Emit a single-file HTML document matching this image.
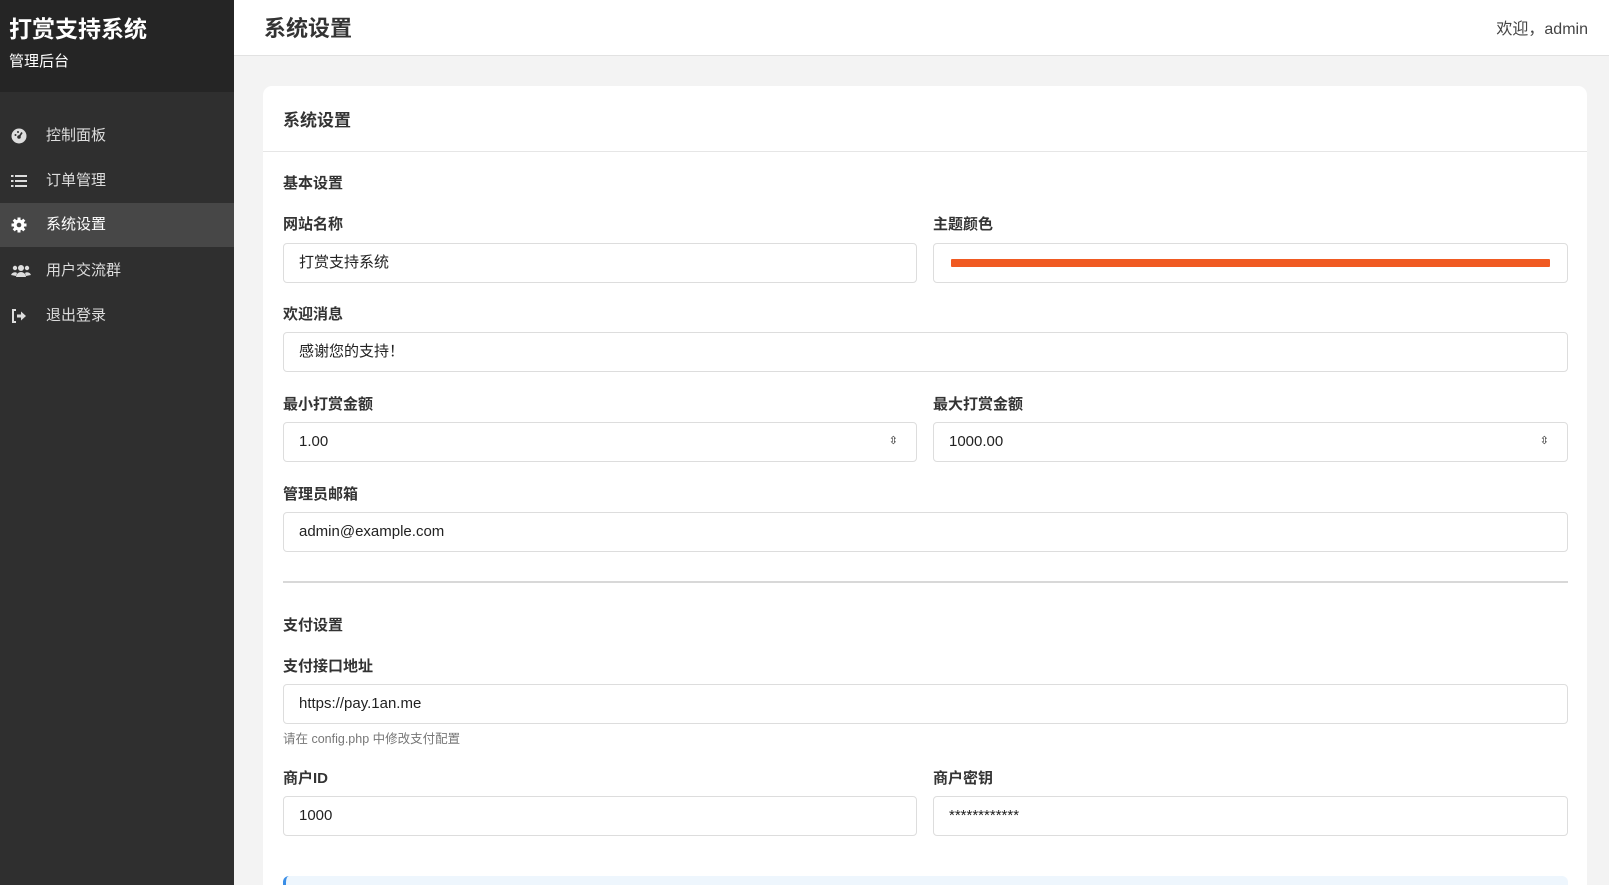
<!DOCTYPE html>
<html><head><meta charset="utf-8"><style>
*{box-sizing:border-box;margin:0;padding:0}
html,body{width:1609px;height:885px;overflow:hidden}
body{background:#f3f3f3;font-family:"Liberation Sans","Noto Sans CJK SC",sans-serif;color:#333;position:relative}
.sb{position:absolute;left:0;top:0;width:234px;height:885px;background:#2f2f2f}
.sbh{height:92px;background:#252525;padding:14px 0 0 9px;color:#fff}
.sbh h1{font-size:23px;font-weight:bold;line-height:30px}
.sbh p{font-size:15px;margin-top:6px}
.mi{position:absolute;left:0;width:234px;height:44px;color:#ddd;font-size:15px;line-height:44px;padding-left:46px}
.mi.act{background:#474747;color:#fff}
.mi svg{position:absolute;left:11px;top:14px}
.top{position:absolute;left:234px;top:0;right:0;height:56px;background:#fff;border-bottom:1px solid #e2e2e2}
.top h2{position:absolute;left:30px;top:11px;font-size:22px;font-weight:bold;color:#333}
.top span{position:absolute;right:21px;top:15px;font-size:16px;color:#444}
.card{position:absolute;left:263px;top:86px;width:1324px;height:820px;background:#fff;border-radius:9px}
.ch{height:66px;border-bottom:1px solid #e6e6e6;padding:20px 0 0 20px;font-size:17px;font-weight:bold}
.lab{position:absolute;font-size:15px;font-weight:bold;color:#333}
.in{position:absolute;height:40px;border:1.5px solid #ddd;border-radius:4px;font-size:15px;line-height:37px;padding-left:15px;color:#222}
</style></head><body>
<div class="sb">
<div class="sbh"><h1>打赏支持系统</h1><p>管理后台</p></div>
<div class="mi" style="top:114px"><svg width="16" height="16" viewBox="0 0 16 16"><circle cx="8" cy="8" r="7.5" fill="#ddd"/><circle cx="8" cy="9" r="1.8" fill="#2f2f2f"/><path d="M8 9L11 4.5" stroke="#2f2f2f" stroke-width="1.6"/><circle cx="4.5" cy="7" r="1" fill="#2f2f2f"/><circle cx="7" cy="4" r="1" fill="#2f2f2f"/></svg>控制面板</div>
<div class="mi" style="top:159px"><svg width="16" height="16" viewBox="0 0 16 16" fill="#ddd"><rect x="0" y="2" width="2.5" height="2"/><rect x="4" y="2" width="12" height="2"/><rect x="0" y="7" width="2.5" height="2"/><rect x="4" y="7" width="12" height="2"/><rect x="0" y="12" width="2.5" height="2"/><rect x="4" y="12" width="12" height="2"/></svg>订单管理</div>
<div class="mi act" style="top:203px"><svg width="16" height="16" viewBox="0 0 16 16"><circle cx="8" cy="8" r="5.5" fill="#fff"/><g stroke="#fff" stroke-width="3"><path d="M8 0.5V15.5M0.5 8H15.5M2.7 2.7L13.3 13.3M13.3 2.7L2.7 13.3"/></g><circle cx="8" cy="8" r="2.3" fill="#474747"/></svg>系统设置</div>
<div class="mi" style="top:249px"><svg width="20" height="16" viewBox="0 0 20 16" fill="#ddd"><circle cx="10" cy="5" r="3"/><circle cx="4" cy="5" r="2.2"/><circle cx="16" cy="5" r="2.2"/><path d="M5 14a5 5 0 0110 0z"/><path d="M0 12a4 4 0 016-2l-1 3z"/><path d="M20 12a4 4 0 00-6-2l1 3z"/></svg>用户交流群</div>
<div class="mi" style="top:294px"><svg width="16" height="16" viewBox="0 0 16 16"><path d="M5 2H2v12h3" stroke="#ddd" stroke-width="2" fill="none"/><path d="M6 6.5h4V3.5l5 4.5-5 4.5V9.5H6z" fill="#ddd"/></svg>退出登录</div>
</div>
<div class="top"><h2>系统设置</h2><span>欢迎，admin</span></div>
<div class="card">
<div class="ch">系统设置</div>
</div>
<div class="lab" style="left:283px;top:172px">基本设置</div>
<div class="lab" style="left:283px;top:213px">网站名称</div>
<div class="lab" style="left:933px;top:213px">主题颜色</div>
<div class="in" style="left:283px;top:243px;width:634px">打赏支持系统</div>
<div class="in" style="left:933px;top:243px;width:635px"><div style="position:absolute;left:17px;right:17px;top:15px;height:8px;background:#f05a22;border-radius:1px"></div></div>
<div class="lab" style="left:283px;top:303px">欢迎消息</div>
<div class="in" style="left:283px;top:332px;width:1285px">感谢您的支持！</div>
<div class="lab" style="left:283px;top:393px">最小打赏金额</div>
<div class="lab" style="left:933px;top:393px">最大打赏金额</div>
<div class="in" style="left:283px;top:422px;width:634px">1.00<span style="position:absolute;right:18px;top:0;font-size:11px">⇳</span></div>
<div class="in" style="left:933px;top:422px;width:635px">1000.00<span style="position:absolute;right:18px;top:0;font-size:11px">⇳</span></div>
<div class="lab" style="left:283px;top:483px">管理员邮箱</div>
<div class="in" style="left:283px;top:512px;width:1285px">admin@example.com</div>
<div style="position:absolute;left:283px;top:581px;width:1285px;height:2px;background:#d8d8d8"></div>
<div class="lab" style="left:283px;top:614px">支付设置</div>
<div class="lab" style="left:283px;top:655px">支付接口地址</div>
<div class="in" style="left:283px;top:684px;width:1285px">https://pay.1an.me</div>
<div style="position:absolute;left:283px;top:728px;font-size:12.5px;color:#777">请在 config.php 中修改支付配置</div>
<div class="lab" style="left:283px;top:767px">商户ID</div>
<div class="lab" style="left:933px;top:767px">商户密钥</div>
<div class="in" style="left:283px;top:796px;width:634px">1000</div>
<div class="in" style="left:933px;top:796px;width:635px">************</div>
<div style="position:absolute;left:283px;top:876px;width:1285px;height:20px;background:#eef6fd;border-left:3px solid #3a8ee6;border-radius:6px"></div>
</body></html>
